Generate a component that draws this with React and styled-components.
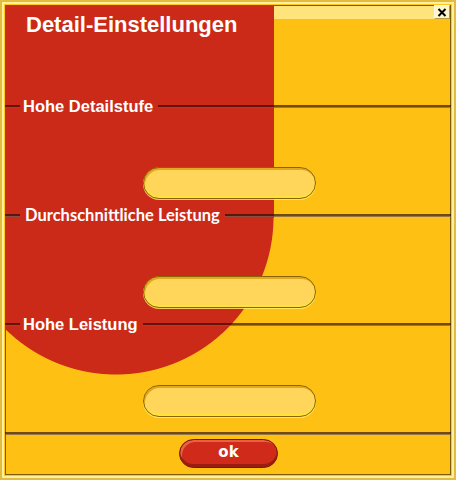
import styled, { createGlobalStyle } from 'styled-components'

const Global = createGlobalStyle`
  body {
    margin: 0;
    overflow: hidden;
    font-family: "Liberation Sans", Arial, sans-serif;
  }
`

const RED = '#cc2a18'
const YELLOW = '#ffc014'

const Frame = styled.div`
  width: 456px;
  height: 480px;
  box-sizing: border-box;
  border: 2px solid #e2bb40;
  padding: 2px;
  background: #fff0a0;
`

const Window = styled.div`
  position: relative;
  height: 100%;
  box-sizing: border-box;
  border: 1px solid #ffc518;
  box-shadow: inset 0 0 0 1px #7d5b00;
  display: flex;
  flex-direction: column;
  background:
    linear-gradient(${RED}, ${RED}) 0 0 / 269px 213px no-repeat,
    radial-gradient(circle 158px at 111px 212px, ${RED} 99.4%, transparent 100%) 0 0 / 100% 100% no-repeat,
    linear-gradient(#ffe47c, #ffe47c) 0 0 / 100% 14px no-repeat,
    ${YELLOW};
`

const CloseButton = styled.button`
  position: absolute;
  top: 0;
  right: 1px;
  width: 16px;
  height: 14px;
  padding: 0;
  box-sizing: border-box;
  border: 1px solid;
  border-color: #fffbe6 #b89a40 #b89a40 #fffbe6;
  background: #fff6cc;
  display: flex;
  align-items: center;
  justify-content: center;
`

const Header = styled.div`
  height: 92px;
  box-sizing: border-box;
  padding: 7px 0 0 21px;
`

const Title = styled.h1`
  margin: 0;
  font-size: 22px;
  line-height: 26px;
  font-weight: bold;
  color: #fff;
`

const Section = styled.div`
  height: 109px;
  display: flex;
  flex-direction: column;
`

const Legend = styled.div`
  height: 18px;
  display: flex;
  align-items: center;
`

const Line = styled.div`
  height: 2px;
  border-bottom: 1px solid rgba(255, 255, 255, 0.25);
  background: rgba(40, 10, 0, 0.65);
  flex: ${p => (p.$grow ? 1 : 'none')};
  width: ${p => (p.$grow ? 'auto' : '15px')};
`

const Label = styled.span`
  padding: 0 5px 0 ${p => (p.$alt ? 5 : 3)}px;
  color: #fff;
  font-size: 16.5px;
  line-height: 18px;
  font-weight: bold;
  font-family: ${p => (p.$alt ? '"Lato", "DejaVu Sans", sans-serif' : '"Liberation Sans", Arial, sans-serif')};
  white-space: nowrap;
`

const Field = styled.div`
  align-self: center;
  width: 173px;
  height: 32px;
  margin: 52px 0 0 3px;
  box-sizing: border-box;
  border-radius: 16px;
  border: 1px solid #8a6400;
  background: #ffd65a;
  box-shadow:
    inset 0 -2px 0 #ffe23a,
    inset 1px 2px 0 #e2a820,
    0 1px 0 rgba(255, 240, 120, 0.8);
`

const Footer = styled.div`
  flex: 1;
  display: flex;
  flex-direction: column;
  align-items: center;
  padding-top: 8px;
`

const Divider = styled.div`
  align-self: stretch;
  height: 2px;
  border-bottom: 1px solid rgba(255, 255, 255, 0.25);
  background: rgba(40, 10, 0, 0.65);
`

const OkButton = styled.button`
  margin: 4px 0 0 1px;
  width: 99px;
  height: 29px;
  box-sizing: border-box;
  border-radius: 15px;
  border: 1px solid #7a1608;
  background: #d02a1a;
  box-shadow:
    inset 0 -3px 0 #9a1e10,
    inset 2px 2px 0 #e8604a;
  color: #fff;
  font-family: "DejaVu Sans", sans-serif;
  font-weight: 900;
  font-size: 15px;
  line-height: 1;
  padding: 0 0 2px;
`

const sections = [
  { label: 'Hohe Detailstufe' },
  { label: 'Durchschnittliche Leistung', alt: true },
  { label: 'Hohe Leistung' },
]

export default function App() {
  return (
    <>
      <Global />
      <Frame>
        <Window>
          <CloseButton aria-label="Schließen">
            <svg width="10" height="9" viewBox="0 0 10 9">
              <path d="M1.5 1 L8.5 8 M8.5 1 L1.5 8" stroke="#000" strokeWidth="2" />
            </svg>
          </CloseButton>
          <Header>
            <Title>Detail-Einstellungen</Title>
          </Header>
          {sections.map(s => (
            <Section key={s.label}>
              <Legend>
                <Line />
                <Label $alt={s.alt}>{s.label}</Label>
                <Line $grow />
              </Legend>
              <Field />
            </Section>
          ))}
          <Footer>
            <Divider />
            <OkButton>ok</OkButton>
          </Footer>
        </Window>
      </Frame>
    </>
  )
}
